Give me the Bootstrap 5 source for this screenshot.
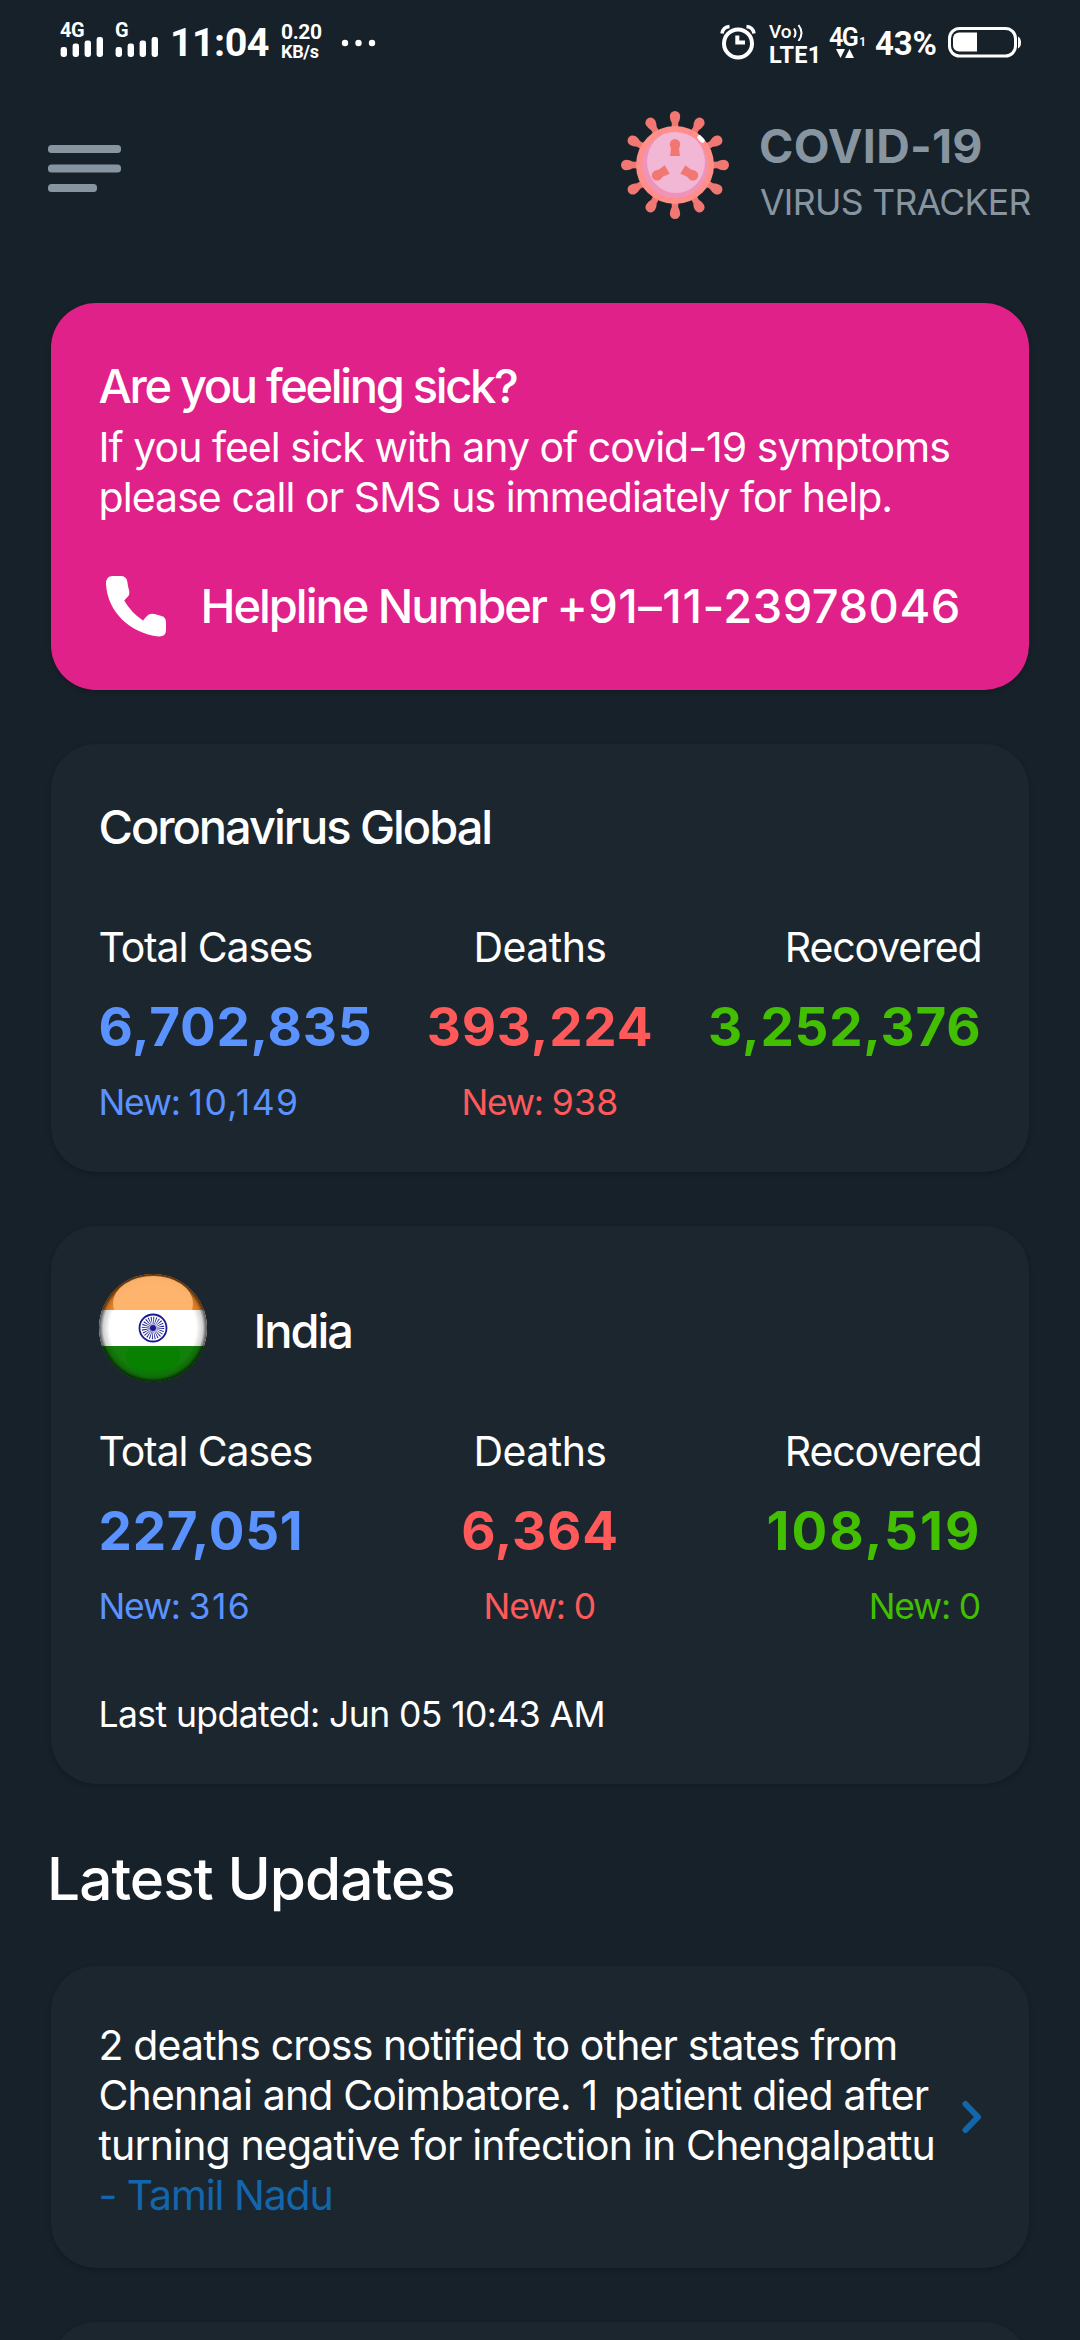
<!DOCTYPE html>
<html lang="en">
<head>
<meta charset="utf-8">
<meta name="viewport" content="width=device-width, initial-scale=1">
<title>COVID-19 Virus Tracker</title>
<link href="https://cdn.jsdelivr.net/npm/bootstrap@5.3.0/dist/css/bootstrap.min.css" rel="stylesheet">
<style>
  body { background: #17212a; color: #fff; font-family: Inter, "Liberation Sans", sans-serif; }
  svg { display: block; flex: none; }
  .screen { width: 1080px; height: 2340px; overflow: hidden; }
  .statusbar { height: 90px; font-family: Roboto, sans-serif; font-weight: 700; white-space: nowrap; }
  .sig { margin-left: 60px; padding-top: 18px; width: 43px; }
  .sig + .sig { margin-left: 12px; }
  .sig-label { font-size: 20px; line-height: 24px; height: 19px; letter-spacing: -.4px; }
  .clock { font-size: 39.5px; line-height: 46px; padding-top: 20px; margin-left: 12px; width: 111px; letter-spacing: -.6px; }
  .speed { padding-top: 20px; width: 60px; }
  .speed-num { font-size: 21px; line-height: 24px; height: 20px; letter-spacing: -.4px; }
  .speed-unit { font-size: 18px; line-height: 22px; letter-spacing: -.3px; padding-top: 1px; }
  .dots { margin-top: 39px; }
  .alarm { margin-left: auto; margin-top: 24px; }
  .volte { width: 60px; margin-left: 13px; padding-top: 22px; }
  .volte-top { font-size: 19px; font-weight: 500; line-height: 20px; height: 17px; }
  .volte-bot { font-size: 23.5px; line-height: 26px; padding-top: 3px; height: 26px; letter-spacing: .3px; }
  .net { width: 46px; padding-top: 29px; }
  .net-top { font-size: 25px; font-weight: 600; line-height: 18px; height: 20px; letter-spacing: -1.6px; }
  .net-one { font-size: 12px; letter-spacing: 0; margin-left: 2px; }
  .pct { font-size: 33px; line-height: 38px; padding-top: 25px; width: 73px; letter-spacing: -.2px; }
  .battery { margin: 27px 59px 0 0; }

  .appbar { height: 213px; padding: 0 48px; color: #8795a1; }
  .menu-icon { margin-top: 55px; }
  .virus { margin-top: 21px; margin-right: 30px; }
  .brand { padding-top: 28px; width: 273px; white-space: nowrap; }
  .brand-name { font-size: 46.5px; line-height: 56px; font-weight: 700; letter-spacing: .25px; }
  .brand-sub { font-size: 35.5px; line-height: 44px; margin-top: 7px; letter-spacing: -.64px; margin-left: 1px; }

  .panel { margin: 0 51px 54px; padding: 53px 47.5px 48px 47.5px; border: 0; border-radius: 45px; background: #1c262f; color: #fff; box-shadow: 0 2px 5px rgba(0,0,0,.22); }
  .panel-pink { background: #df2189; height: 387px; }
  .panel-title { font-size: 47px; line-height: 60px; font-weight: 500; letter-spacing: -2.04px; margin: 0; white-space: nowrap; }
  .tight { letter-spacing: -2.33px; }
  .digits { letter-spacing: .5px; }
  .copy { font-size: 41px; line-height: 50px; letter-spacing: -.98px; margin: 6px 0 53px; white-space: nowrap; }
  .copy-l2 { letter-spacing: -.93px; }
  .phone { margin: 1px 35px 0 7px; }
  .stats { white-space: nowrap; }
  .stats-global { margin-top: 65px; }
  .stats-country { margin-top: 44px; }
  .stat-label { font-size: 41px; line-height: 50px; letter-spacing: -1.13px; }
  .stat-mid .stat-label { letter-spacing: -.57px; }
  .stat-num { font-size: 53px; line-height: 64px; font-weight: 700; letter-spacing: .76px; margin-top: 23px; }
  .stat-new { font-size: 35.5px; line-height: 44px; height: 44px; margin-top: 22px; margin-bottom: -1px; letter-spacing: -1.2px; }
  .stat-val { letter-spacing: .3px; }
  .stat-val-long { letter-spacing: 1.4px; }
  .wide1 { letter-spacing: 2.07px; }
  .c-blue { color: #5a92ff; } .c-red { color: #ff595a; } .c-green { color: #41bf00; }
  .updated { font-size: 35.5px; line-height: 44px; letter-spacing: -.58px; margin: 65px 0 -1px; }
  .section-title { font-size: 58.5px; line-height: 70px; font-weight: 500; letter-spacing: -.94px; margin: 60px 47px 52px; }
  .news { font-size: 41px; line-height: 50px; letter-spacing: -.85px; white-space: nowrap; padding-top: 1px; }
  .one { margin-right: 6px; }
  .c-link { color: #1366ab; letter-spacing: -1.1px; }
  .chevron { margin-top: -5px; }
  .country { gap: 47px; height: 108px; }
  .country .panel-title { padding-top: 6px; }
</style>
</head>
<body>
<div class="screen">
<div class="statusbar d-flex align-items-start">
  <div class="sig">
    <div class="sig-label">4G</div>
    <svg width="43" height="20" fill="#fff"><rect y="10" x=".6" width="6.400" height="10" rx="2.400"/><rect x="12.600" y="6.500" width="6.400" height="13.500" rx="2.400"/><rect x="24.600" y="3.500" width="6.400" height="16.500" rx="2.400"/><rect x="36.600" width="6.400" height="20" rx="2.400"/></svg>
  </div>
  <div class="sig">
    <div class="sig-label">G</div>
    <svg width="43" height="20" fill="#fff"><rect x=".6" y="10" width="6.400" height="10" rx="2.400"/><rect x="12.600" y="6.500" width="6.400" height="13.500" rx="2.400"/><rect x="24.600" y="3.500" width="6.400" height="16.500" rx="2.400"/><rect x="36.600" width="6.400" height="20" rx="2.400"/></svg>
  </div>
  <div class="clock">11:04</div>
  <div class="speed"><div class="speed-num">0.20</div><div class="speed-unit">KB/s</div></div>
  <svg class="dots" width="36" height="8" fill="#fff"><circle cx="4" cy="4" r="3.200"/><circle cx="17.500" cy="4" r="3.200"/><circle cx="31" cy="4" r="3.200"/></svg>
  <svg class="alarm" width="36" height="36" fill="none" stroke="#fff"><circle cx="18" cy="19.500" r="14" stroke-width="4"/><path d="M17.300 11.500V18.500H25" stroke-width="4"/><path d="M2 9.500Q3 3 9.500 2.500M26.500 2.500Q33 3 34 9.500" stroke-width="3.500"/></svg>
  <div class="volte">
    <div class="volte-top d-flex">Vo<svg width="12" height="19" viewBox="0 0 12 19" fill="none" stroke="#fff" stroke-width="2"><path d="M2 6.500Q5 11 2 15.500M6.500 3Q12.500 11 6.500 19"/></svg></div>
    <div class="volte-bot">LTE1</div>
  </div>
  <div class="net">
    <div class="net-top">4G<span class="net-one">1</span></div>
    <svg width="26" height="9" fill="#fff"><path d="M7 0h9L11.500 9z"/><path d="M16 9h9L20.500 0z"/></svg>
  </div>
  <div class="pct">43%</div>
  <svg class="battery" width="73" height="31" fill="none" stroke="#fff"><rect x="1.500" y="1.500" width="66" height="27.500" rx="10" stroke-width="3"/><path d="M29 5.500H11a6 6 0 0 0-6 6v7a6 6 0 0 0 6 6H29z" fill="#fff" stroke="none"/><path d="M70 9.500q3 1.500 3 6t-3 6z" fill="#fff" stroke="none"/></svg>
</div>

<header class="appbar d-flex align-items-start">
  <svg class="menu-icon me-auto" width="74" height="48" fill="#8795a1"><rect width="73" height="8" rx="3.500"/><rect y="19.500" width="73" height="8" rx="3.500"/><rect y="39" width="49" height="8" rx="3.500"/></svg>
  <svg class="virus" width="108" height="108" viewBox="-54 -54 108 108">
    <defs>
      <path id="spike" d="M-3.500-34L-3.200-42Q-5.200-45.500-5.200-48.800A5.200 5.200 0 0 1 5.200-48.800Q5.200-45.500 3.200-42L3.500-34z"/>
      <path id="bud" d="M-5-9L-4-16.500Q-5.200-18.500-5.200-20.800A5.200 5.200 0 0 1 5.200-20.800Q5.200-18.500 4-16.500L5-9z"/>
      <clipPath id="core"><circle r="33"/></clipPath>
    </defs>
    <g fill="#f17772"><use href="#spike"/><use href="#spike" transform="rotate(30)"/><use href="#spike" transform="rotate(60)"/><use href="#spike" transform="rotate(90)"/><use href="#spike" transform="rotate(120)"/><use href="#spike" transform="rotate(150)"/><use href="#spike" transform="rotate(180)"/><use href="#spike" transform="rotate(210)"/><use href="#spike" transform="rotate(240)"/><use href="#spike" transform="rotate(270)"/><use href="#spike" transform="rotate(300)"/><use href="#spike" transform="rotate(330)"/></g>
    <circle r="39" fill="#ff8f88"/>
    <circle r="33" fill="#f093b8"/>
    <ellipse cx="1" cy="-3" rx="29" ry="31" fill="#f1b7d4" clip-path="url(#core)"/>
    <g fill="#f17772"><use href="#bud"/><use href="#bud" transform="rotate(120)"/><use href="#bud" transform="rotate(240)"/></g>
    <path d="M24.500-27.500L27.500-24.500" stroke="#fff" stroke-width="4.500" stroke-linecap="round"/>
  </svg>
  <div class="brand">
    <div class="brand-name">COVID-19</div>
    <div class="brand-sub">VIRUS TRACKER</div>
  </div>
</header>

<main>
  <section class="card panel panel-pink">
    <h2 class="panel-title tight">Are you feeling sick?</h2>
    <p class="copy">If you feel sick with any of covid-19 symptoms<br><span class="copy-l2">please call or SMS us immediately for help.</span></p>
    <div class="d-flex align-items-center">
      <svg class="phone" width="60" height="61" fill="#fff"><path d="M0 8Q0 0 6.500 0H14.500Q20.500 0 21.300 5.500Q21.700 9.500 23 14Q24.200 18.500 21.500 21L18.200 24.500Q25.500 37 37 44.500L40 41Q43.500 36.500 48.500 38L55.500 40Q60 41 60 46.500V54Q60 61 52.500 60.500C24 57 1.500 36 0 8z"/></svg>
      <div class="panel-title">Helpline Number <span class="digits">+91–11-23978046</span></div>
    </div>
  </section>

  <section class="card panel">
    <h2 class="panel-title">Coronavirus Global</h2>
    <div class="stats stats-global row g-0">
      <div class="col-4"><div class="stat-label">Total Cases</div><div class="stat-num c-blue">6,702,835</div><div class="stat-new c-blue">New: <span class="stat-val-long">10,149</span></div></div>
      <div class="col-4 text-center stat-mid"><div class="stat-label">Deaths</div><div class="stat-num c-red">393,224</div><div class="stat-new c-red">New: <span class="stat-val">938</span></div></div>
      <div class="col-4 text-end"><div class="stat-label">Recovered</div><div class="stat-num c-green">3,252,376</div><div class="stat-new"></div></div>
    </div>
  </section>

  <section class="card panel pt-5 mb-0">
    <div class="country d-flex align-items-center">
      <svg width="108" height="108" viewBox="-54 -54 108 108">
        <defs>
          <radialGradient id="rim"><stop offset=".8" stop-color="#000" stop-opacity="0"/><stop offset=".92" stop-color="#000" stop-opacity=".18"/><stop offset="1" stop-color="#000" stop-opacity=".72"/></radialGradient>
          <clipPath id="disc"><circle r="54"/></clipPath>
          <clipPath id="saffron"><rect x="-54" y="-54" width="108" height="36"/></clipPath>
          <clipPath id="green"><rect x="-54" y="20" width="108" height="34"/></clipPath>
        </defs>
        <g clip-path="url(#disc)">
          <rect x="-54" y="-54" width="108" height="36" fill="#f28c28"/>
          <rect x="-54" y="-18" width="108" height="36" fill="#fff"/>
          <rect x="-54" y="18" width="108" height="36" fill="#14800c"/>
          <ellipse cy="28" rx="27" ry="18" fill="#088000" clip-path="url(#green)"/>
          <circle r="54" fill="url(#rim)"/>
          <ellipse cy="-25" rx="40" ry="27" fill="#ffb873" fill-opacity=".9" clip-path="url(#saffron)"/>
        </g>
        <circle r="13.500" fill="#fff" stroke="#1a1a90" stroke-width="1.800"/>
        <circle r="7" fill="none" stroke="#1a1a90" stroke-width="8.500" stroke-dasharray=".7 1.133"/>
        <circle r="3" fill="#1a1a90"/>
      </svg>
      <h2 class="panel-title">India</h2>
    </div>
    <div class="stats stats-country row g-0">
      <div class="col-4"><div class="stat-label">Total Cases</div><div class="stat-num c-blue">227,051</div><div class="stat-new c-blue">New: <span class="stat-val-long">316</span></div></div>
      <div class="col-4 text-center stat-mid"><div class="stat-label">Deaths</div><div class="stat-num c-red">6,364</div><div class="stat-new c-red">New: <span class="stat-val">0</span></div></div>
      <div class="col-4 text-end"><div class="stat-label">Recovered</div><div class="stat-num wide1 c-green">108,519</div><div class="stat-new c-green">New: <span class="stat-val">0</span></div></div>
    </div>
    <div class="updated">Last updated: Jun 05 10:43 AM</div>
  </section>

  <h1 class="section-title">Latest Updates</h1>

  <section class="card panel flex-row align-items-center justify-content-between">
    <div class="news">2 deaths cross notified to other states from<br>Chennai and Coimbatore. <span class="one">1</span> patient died after<br>turning negative for infection in Chengalpattu<br><span class="c-link">- Tamil Nadu</span></div>
    <svg class="chevron" width="20" height="34" fill="none" stroke="#1366ab" stroke-width="6" stroke-linecap="round" stroke-linejoin="round"><path d="M3.500 4L16 17L3.500 30"/></svg>
  </section>
  <section class="card panel"></section>
</main>
</div>
<script src="https://cdn.jsdelivr.net/npm/bootstrap@5.3.0/dist/js/bootstrap.bundle.min.js"></script>
</body>
</html>
